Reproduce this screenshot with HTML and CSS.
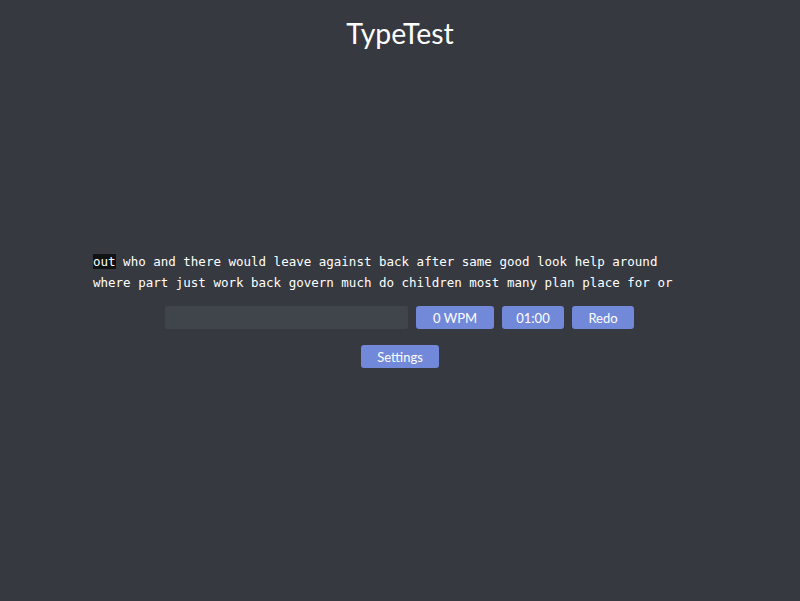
FILE: index.html
```html
<!DOCTYPE html>
<html>
<head>
<meta charset="utf-8">
<link rel="stylesheet" href="styles.css">
</head>
<body>
<h1 class="title">TypeTest</h1>
<main class="test">
  <div class="words">
    <div class="line"><span class="current">out</span> who and there would leave against back after same good look help around</div>
    <div class="line">where part just work back govern much do children most many plan place for or</div>
  </div>
  <div class="controls">
    <input class="entry" type="text">
    <button class="btn wpm">0 WPM</button>
    <button class="btn timer">01:00</button>
    <button class="btn redo">Redo</button>
  </div>
  <div class="settings-row">
    <button class="btn settings">Settings</button>
  </div>
</main>
</body>
</html>
```
FILE: styles.css
```css
html, body {
  margin: 0;
  padding: 0;
  background: #36393f;
  height: 100%;
}
body {
  font-family: Lato, "Open Sans", sans-serif;
  color: #fff;
}
.title {
  margin: 0;
  padding-top: 16px;
  text-align: center;
  font-weight: 400;
  font-size: 28.4px;
  line-height: 34px;
}
.test {
  width: 614px;
  margin: 0 auto;
  padding-top: 201px;
}
.words {
  font-family: "DejaVu Sans Mono", monospace;
  font-size: 12.5px;
  line-height: 21px;
  color: #fff;
  white-space: nowrap;
}
.current {
  background: #111214;
}
.controls {
  display: flex;
  justify-content: center;
  gap: 8px;
  margin-top: 13px;
  padding-right: 1px;
}
.entry {
  width: 243px;
  height: 23px;
  box-sizing: border-box;
  border: none;
  background: #40444b;
  padding: 0 6px;
  outline: none;
  border-radius: 2px;
}
.btn {
  height: 23px;
  border: none;
  border-radius: 3px;
  background: #7289da;
  color: #fff;
  font-family: Lato, sans-serif;
  font-size: 13px;
  padding: 0;
}
.wpm { width: 78px; }
.timer { width: 62px; }
.redo { width: 62px; }
.settings-row {
  display: flex;
  justify-content: center;
  margin-top: 16px;
}
.settings { width: 78px; }
```
